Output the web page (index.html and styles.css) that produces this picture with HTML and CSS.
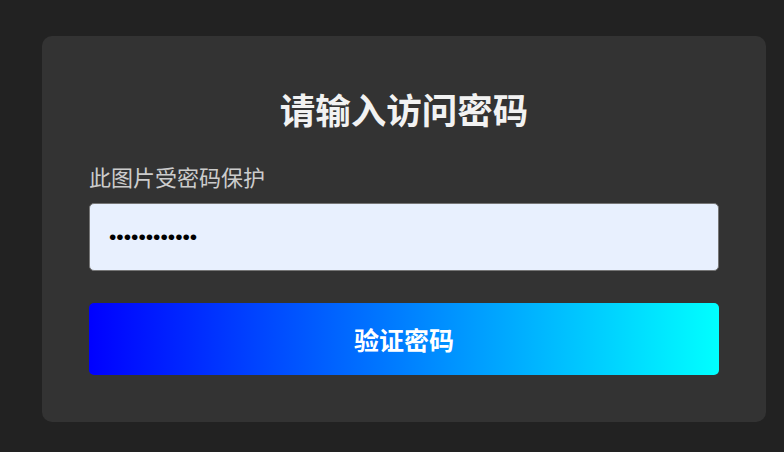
FILE: index.html
```html
<!DOCTYPE html>
<html lang="zh-CN">
<head>
<meta charset="utf-8">
<title>请输入访问密码</title>
<link rel="stylesheet" href="styles.css">
</head>
<body>
<main class="page">
  <form class="card" onsubmit="return false;">
    <h1 class="card-title">请输入访问密码</h1>
    <label class="card-label" for="pwd">此图片受密码保护</label>
    <input class="card-input" id="pwd" type="password" value="abcdefghijkl">
    <button class="card-button" type="submit">验证密码</button>
  </form>
</main>
</body>
</html>
```
FILE: styles.css
```css
* {
  box-sizing: border-box;
}

html, body {
  margin: 0;
  height: 100%;
  background: #222222;
}

body {
  font-family: "Noto Sans CJK SC", "Noto Sans", sans-serif;
}

.page {
  padding: 36px 18px 0 42px;
}

.card {
  display: flex;
  flex-direction: column;
  width: 724px;
  padding: 52px 47px 47px;
  background: #333333;
  border-radius: 10px;
}

.card-title {
  margin: 0;
  font-size: 35.5px;
  line-height: 41px;
  font-weight: 700;
  color: #f2f2f2;
  text-align: center;
}

.card-label {
  margin-top: 33px;
  font-size: 22px;
  line-height: 29px;
  color: #cccccc;
}

.card-input {
  margin-top: 12px;
  height: 68px;
  padding: 0 19px;
  border: 1px solid #767676;
  border-radius: 5px;
  background: #e8f0fe;
  font-family: "Liberation Sans", Arial, sans-serif;
  font-size: 21px;
  color: #000;
  outline: none;
}

.card-button {
  margin-top: 32px;
  height: 72px;
  border: none;
  border-radius: 5px;
  background: linear-gradient(to right, #0000ff, #00ffff);
  color: #ffffff;
  font-family: "Noto Sans CJK SC", sans-serif;
  font-size: 25px;
  font-weight: 700;
  cursor: pointer;
}
```
